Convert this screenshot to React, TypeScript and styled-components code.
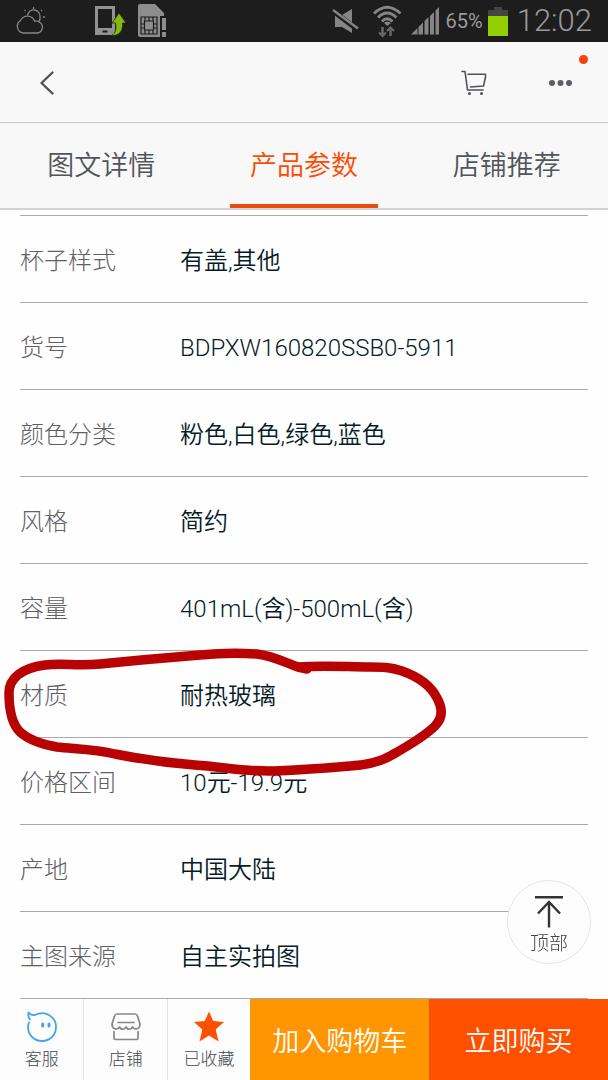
import React from "react";
import styled, { createGlobalStyle } from "styled-components";

const GlobalStyle = createGlobalStyle`
  * { box-sizing: border-box; }
  body {
    margin: 0;
    background: #fefefe;
    font-family: Roboto, "Noto Sans CJK SC", sans-serif;
    font-weight: 350;
  }
  button { font: inherit; border: 0; padding: 0; cursor: pointer; }
`;

const Page = styled.div`
  display: flex;
  flex-direction: column;
  min-height: 100vh;
`;

const Top = styled.div`
  position: sticky;
  top: 0;
  z-index: 3;
`;

const StatusBar = styled.div`
  display: flex;
  align-items: center;
  justify-content: space-between;
  height: 42px;
  padding: 0 16px;
  background: #1d1d1d;
  color: #9a9a9a;
  svg { display: block; }
`;

const StatusLeft = styled.div`
  display: flex;
  align-items: center;
  svg:first-child { margin-right: 48px; }
  svg + svg + svg { margin-left: 12px; }
`;

const StatusRight = styled.div`
  display: flex;
  align-items: center;
  gap: 5px;
`;

const Percent = styled.span`
  font-size: 20px;
  font-weight: 400;
  line-height: 42px;
`;

const Clock = styled.time`
  margin-left: 4px;
  font-size: 31px;
  line-height: 42px;
`;

const NavBar = styled.header`
  display: flex;
  align-items: center;
  height: 81px;
  padding: 2px 24px 0;
  background: #f8f8f8;
  border-bottom: 1px solid #c8c8c8;
`;

const IconButton = styled.button<{ $push?: boolean }>`
  position: relative;
  display: grid;
  place-items: center;
  width: 46px;
  height: 60px;
  margin-left: ${(p) => (p.$push ? "auto" : "0")};
  background: none;
  & + & + & { margin-left: 41px; }
`;

const Dot = styled.span`
  position: absolute;
  top: 2px;
  right: -4px;
  width: 9px;
  height: 9px;
  border-radius: 50%;
  background: #f8430c;
`;

const Tabs = styled.nav`
  display: grid;
  grid-template-columns: repeat(3, 1fr);
  justify-items: center;
  height: 87px;
  background: #f8f8f8;
  border-bottom: 2px solid #d2d2d2;
`;

const Tab = styled.button<{ $active?: boolean }>`
  padding: 4px 20px 0;
  background: none;
  border-bottom: 4px solid ${(p) => (p.$active ? "#ee4a0c" : "transparent")};
  color: ${(p) => (p.$active ? "#ff4a00" : "#51555b")};
  font-size: 27px;
  line-height: 40px;
`;

const Main = styled.main`
  position: relative;
  flex: 1;
  padding: 5px 20px 0;
`;

const Params = styled.dl`
  margin: 0;
  border-top: 1px solid #aaa;
`;

const Row = styled.div`
  display: flex;
  align-items: center;
  height: 87px;
  padding-top: 4px;
  border-bottom: 1px solid #aaa;
  font-size: 24px;
  line-height: 36px;
`;

const Name = styled.dt`
  flex: 0 0 160px;
  color: #5f6064;
  font-weight: 300;
`;

const Value = styled.dd`
  margin: 0;
  color: #051b28;
`;

const Scribble = styled.svg`
  position: absolute;
  left: 0;
  top: 430px;
  pointer-events: none;
`;

const ToTop = styled.button`
  position: fixed;
  right: 17px;
  bottom: 116px;
  z-index: 2;
  display: flex;
  flex-direction: column;
  align-items: center;
  width: 84px;
  height: 84px;
  padding-top: 14px;
  border: 1px solid #e4e4e4;
  border-radius: 50%;
  background: #fdfdfd;
  color: #444;
  font-size: 19px;
  font-weight: 300;
  line-height: 30px;
  svg { display: block; }
`;

const Footer = styled.footer`
  position: sticky;
  bottom: 0;
  z-index: 3;
  display: grid;
  grid-template-columns: 7fr 7fr 7fr 15fr 15fr;
  height: 81px;
  background: #fdfdfd;
`;

const Shortcut = styled.button`
  display: flex;
  flex-direction: column;
  align-items: center;
  padding-top: 10px;
  background: #fdfdfd;
  color: #44474c;
  font-size: 17px;
  font-weight: 300;
  line-height: 24px;
  svg { display: block; margin-bottom: 4px; }
  & + & { border-left: 1px solid #e2e2e2; }
`;

const Buy = styled.button<{ $color: string }>`
  padding-top: 4px;
  background: ${(p) => p.$color};
  color: #fff;
  font-size: 27px;
  line-height: 40px;
`;

const WeatherIcon = () => (
  <svg width="31" height="30" viewBox="0 0 31 30" fill="none" stroke="#858585" strokeWidth="1.3">
    <path d="M7.500 27H20.500a5.800 5.800 0 0 0 3.500-10.500a5.800 5.800 0 0 0-5.500-1.500a7.600 7.600 0 0 0-14-0.500a6.800 6.800 0 0 0 3 12.500Z" />
    <path d="M11.500 9.500a6 6 0 0 1 12.500 1.500a6 6 0 0 1-1 4.500" />
    <path d="M8.500 4l1 1M17.500 1v2M26 4l-1 1M29 11h-2" />
  </svg>
);

const PhoneIcon = () => (
  <svg width="31" height="32" viewBox="0 0 31 32">
    <path fill="#929292" fillRule="evenodd" d="M0 1H20V30H0ZM3 4V23H17V4ZM7.500 25.500v2h5v-2Z" />
    <path fill="#86b80b" stroke="#1d1d1d" strokeWidth=".7" d="M24 8L31 18H27.500C28.500 26 24 31 16.500 30.500C21 27.500 21.500 24 20.500 18H17Z" />
  </svg>
);

const SimIcon = () => (
  <svg width="29" height="34" viewBox="0 0 29 34">
    <path fill="#8d8d8d" d="M0 2Q0 0 2 0H17L26 9V12H22V33H2Q0 33 0 31Z" />
    <g fill="none" stroke="#1d1d1d" strokeWidth="1.200">
      <path d="M3 13H19V30H3ZM6.500 17H15.500V26H6.500ZM7 13V17M11 13V17M15 13V17M7 26V30M11 26V30M15 26V30M3 20H6M3 24H6M16 20H19M16 24H19" />
    </g>
    <path fill="#8d8d8d" d="M24 14H28V26H24ZM24 28H28V33H24Z" />
  </svg>
);

const MuteIcon = () => (
  <svg width="36" height="30" viewBox="0 0 36 30">
    <path fill="#858585" d="M7 9H14L24 3V27L14 21H7Z" />
    <path stroke="#1d1d1d" strokeWidth="5" d="M5 5L30 24" />
    <path stroke="#858585" strokeWidth="2.300" d="M5 4L30 22.500" />
  </svg>
);

const WifiIcon = () => (
  <svg width="37" height="34" viewBox="0 0 37 34" fill="none" stroke="#858585">
    <g strokeWidth="2.800">
      <path d="M5 9.500Q18 -3 31.500 9.500" />
      <path d="M9 13.500Q18 4.500 27.500 13.500" />
      <path d="M13 17.500Q18 12 23.500 17.500" />
    </g>
    <path fill="#858585" stroke="none" d="M15 19Q18 16 22 19L18.300 22Z" />
    <path stroke="#686868" strokeWidth="2.500" d="M13.500 23V31M21.500 32V24" />
    <path stroke="#686868" strokeWidth="2" d="M10 28.500L13.500 32L17 28.500M18 27L21.500 23.500L25 27" />
  </svg>
);

const SignalIcon = () => (
  <svg width="30" height="28" viewBox="0 0 30 28" fill="#858585">
    <path d="M0 27.500L6.500 21V27.500ZM7.500 20L12 15.500V27.500H7.500ZM13.500 14L17.500 10V27.500H13.500ZM19 9L23 5V27.500H19ZM24.500 3.500L28 0V27.500H24.500Z" />
  </svg>
);

const BatteryIcon = () => (
  <svg width="20" height="30" viewBox="0 0 20 30">
    <path fill="#444" d="M6 1H14V4H20V11H0V4H6Z" />
    <path fill="#93cf00" d="M0 10H20V30H0Z" />
  </svg>
);

const BackIcon = () => (
  <svg width="16" height="26" viewBox="0 0 16 26" fill="none" stroke="#505257" strokeWidth="2.400" strokeLinecap="round" strokeLinejoin="round">
    <path d="M13.500 2.500L2.500 13L13.500 23.500" />
  </svg>
);

const CartIcon = () => (
  <svg width="26" height="26" viewBox="0 0 26 26" fill="none" stroke="#505257" strokeWidth="1.600" strokeLinecap="round" strokeLinejoin="round">
    <path d="M1 1.500H4L6.500 20H22M7 4.300H24.500V7L22.500 16L9.500 17" />
    <circle cx="8.500" cy="23.500" r="1.500" fill="#505257" stroke="none" />
    <circle cx="20.500" cy="23.500" r="1.500" fill="#505257" stroke="none" />
  </svg>
);

const MoreIcon = () => (
  <svg width="26" height="8" viewBox="0 0 26 8" fill="#5b5d62">
    <circle cx="4" cy="4" r="3" />
    <circle cx="12.500" cy="4" r="3" />
    <circle cx="21" cy="4" r="3" />
  </svg>
);

const ToTopIcon = () => (
  <svg width="30" height="34" viewBox="0 0 30 34" fill="none" stroke="#333" strokeWidth="2.400">
    <path d="M1 2.200H29M15 32.500V7M4 18.500L15 7L26 18.500" />
  </svg>
);

const ServiceIcon = () => (
  <svg width="32" height="34" viewBox="0 0 32 34" fill="none" stroke="#45a5e8" strokeWidth="1.800" strokeLinecap="round" strokeLinejoin="round">
    <path d="M4 10.500C2.500 8.500 2 6 2.500 3.500C4 5.500 6 6.300 9 6C19 1 30 7.500 30 18C30 26 24 32 16 32C8 32 2 26 2 18C2 16 2.300 15 3 13.500" />
    <path strokeWidth="3" d="M16.700 15V17M23 15V17" />
  </svg>
);

const ShopIcon = () => (
  <svg width="32" height="34" viewBox="0 0 32 34" fill="none" stroke="#85868a" strokeWidth="1.700" strokeLinecap="round" strokeLinejoin="round">
    <path d="M7 5H25Q27 5 27.500 7L30 15C30 20 25 21.500 22.500 18C20.500 21 17.500 21 16 18C14 21 11 21 9.500 18C7 21.500 2 20 2 15L4.500 7Q5 5 7 5ZM8 13.500H24M4 22.500V29Q4 30.500 5.500 30.500H26.500Q28 30.500 28 29V22.500" />
  </svg>
);

const StarIcon = () => (
  <svg width="32" height="34" viewBox="0 0 32 34">
    <path fill="#ff5000" d="M16 2.500L20.200 12L31 13L22.700 20.500L25.500 32.500L16 26.500L6.500 32.500L9.300 20.500L1 13L11.800 12Z" />
  </svg>
);

const params: [string, string][] = [
  ["杯子样式", "有盖,其他"],
  ["货号", "BDPXW160820SSB0-5911"],
  ["颜色分类", "粉色,白色,绿色,蓝色"],
  ["风格", "简约"],
  ["容量", "401mL(含)-500mL(含)"],
  ["材质", "耐热玻璃"],
  ["价格区间", "10元-19.9元"],
  ["产地", "中国大陆"],
  ["主图来源", "自主实拍图"],
];

export default function App() {
  return (
    <Page lang="zh-CN">
      <GlobalStyle />
      <Top>
        <StatusBar>
          <StatusLeft>
            <WeatherIcon />
            <PhoneIcon />
            <SimIcon />
          </StatusLeft>
          <StatusRight>
            <MuteIcon />
            <WifiIcon />
            <SignalIcon />
            <Percent>65%</Percent>
            <BatteryIcon />
            <Clock>12:02</Clock>
          </StatusRight>
        </StatusBar>
        <NavBar>
          <IconButton aria-label="返回"><BackIcon /></IconButton>
          <IconButton aria-label="购物车" $push><CartIcon /></IconButton>
          <IconButton aria-label="更多"><MoreIcon /><Dot /></IconButton>
        </NavBar>
        <Tabs>
          <Tab>图文详情</Tab>
          <Tab $active aria-current="page">产品参数</Tab>
          <Tab>店铺推荐</Tab>
        </Tabs>
      </Top>
      <Main>
        <Params>
          {params.map(([name, value]) => (
            <Row key={name}>
              <Name>{name}</Name>
              <Value>{value}</Value>
            </Row>
          ))}
        </Params>
        <Scribble width="460" height="150" viewBox="0 0 460 150" fill="none" stroke="#b90202" strokeWidth="9.500" strokeLinecap="round" strokeLinejoin="round" aria-hidden="true">
          <path d="M307 29L298 27C284 22 273 16 257 14C242 13 220 13 200 15C175 17 130 21 100 24C78 26 62 23 45 25C22 28 9 38 9 53C9 70 12 84 20 92C30 101 45 105 57 107C75 109 95 109 115 114C145 120 170 123 195 125C225 127 245 132 275 131C300 130 327 128 350 126C368 125 382 121 392 115C408 106 425 96 435 86C444 77 442 67 437 58C431 46 419 37 402 31C390 27 382 27 370 27C348 27 325 25 298 27" />
        </Scribble>
      </Main>
      <ToTop>
        <ToTopIcon />
        顶部
      </ToTop>
      <Footer>
        <Shortcut><ServiceIcon />客服</Shortcut>
        <Shortcut><ShopIcon />店铺</Shortcut>
        <Shortcut><StarIcon />已收藏</Shortcut>
        <Buy $color="#ff9500">加入购物车</Buy>
        <Buy $color="#ff5000">立即购买</Buy>
      </Footer>
    </Page>
  );
}
